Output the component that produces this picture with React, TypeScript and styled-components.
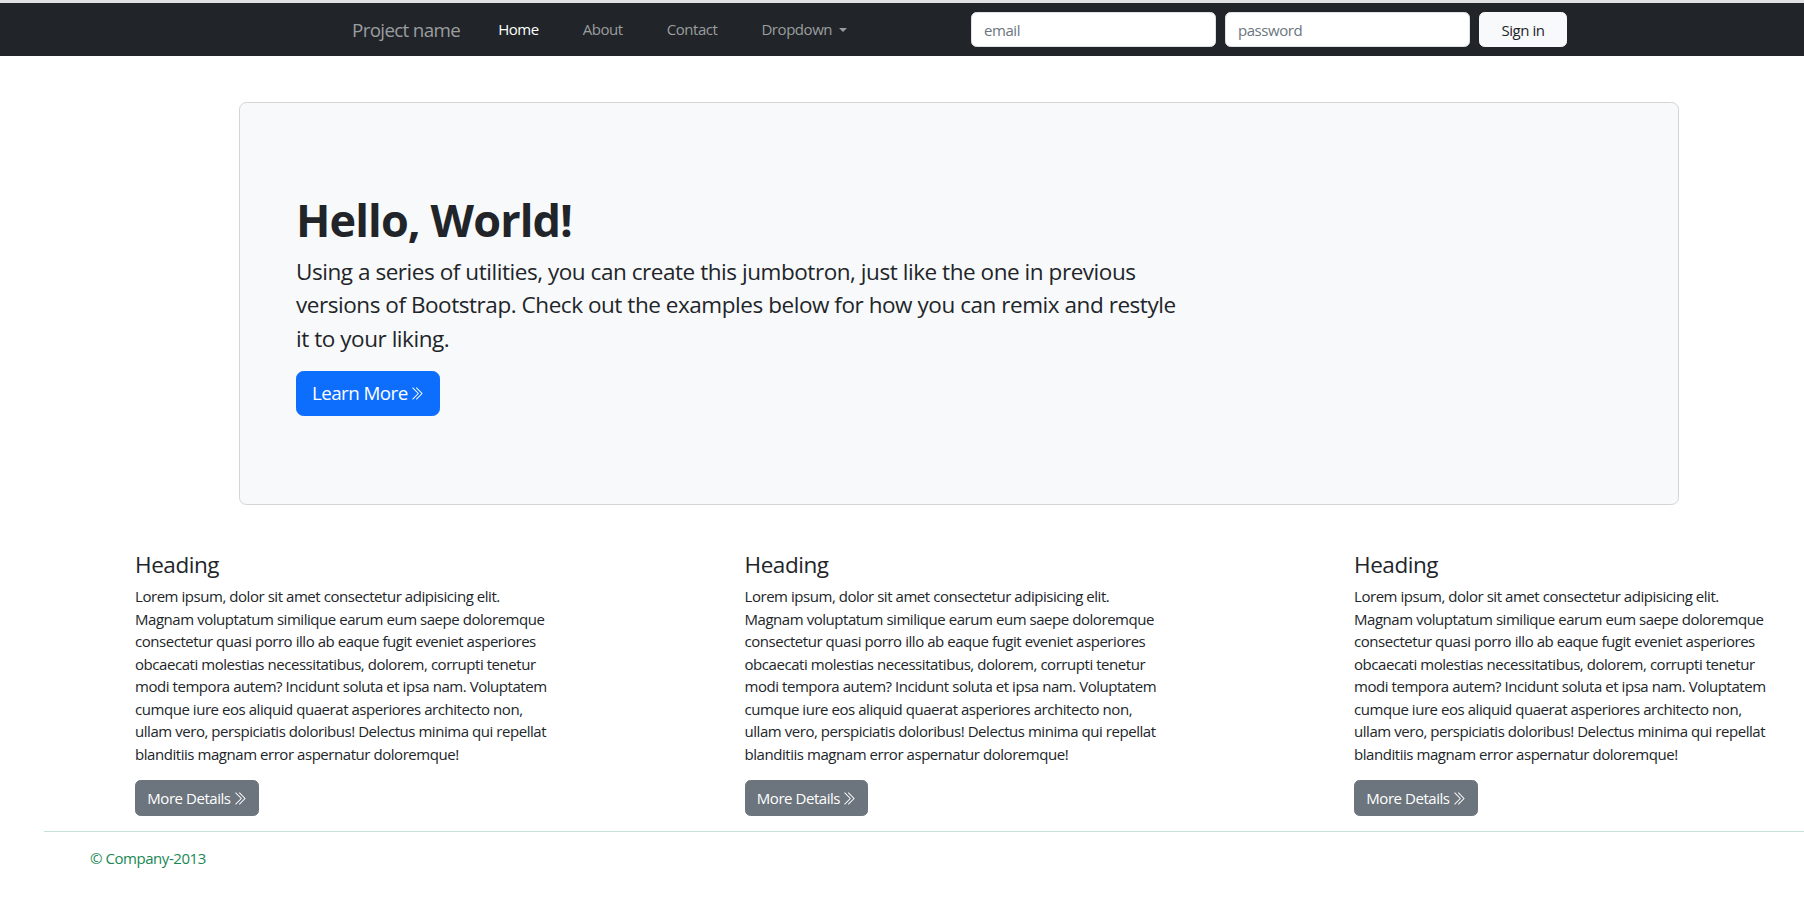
import React from "react";
import styled, { createGlobalStyle } from "styled-components";
import { BsChevronDoubleRight } from "react-icons/bs";

const GlobalStyle = createGlobalStyle`
  html, body {
    margin: 0;
    padding: 0;
    background: #ffffff;
  }
  body {
    font-family: "Open Sans", "Noto Sans", "Liberation Sans", sans-serif;
    font-size: 15px;
    line-height: 22.5px;
    color: #212529;
    letter-spacing: -0.03em;
    overflow-x: hidden;
  }
  * { box-sizing: border-box; }
`;

const Page = styled.div`
  display: flex;
  flex-direction: column;
  min-height: 900px;
`;

const TopEdge = styled.div`
  height: 3px;
  background: #dfe1e3;
`;

const NavBar = styled.nav`
  height: 53px;
  background: #212529;
  display: flex;
  align-items: center;
`;

const NavLeft = styled.div`
  flex: 0 0 971px;
  padding-left: 352px;
  display: flex;
  align-items: center;
`;

const Brand = styled.a`
  font-size: 18.8px;
  line-height: 28px;
  color: #9b9d9f;
  text-decoration: none;
  margin-right: 16px;
  letter-spacing: -0.035em;
`;

const NavList = styled.ul`
  list-style: none;
  margin: 0;
  padding: 0;
  display: flex;
  align-items: center;
`;

const NavLink = styled.a<{ $active?: boolean }>`
  display: inline-flex;
  align-items: center;
  padding: 0 22px;
  font-size: 15px;
  line-height: 22.5px;
  color: ${(p) => (p.$active ? "#ffffff" : "#9b9d9f")};
  text-decoration: none;
`;

const Caret = styled.span`
  display: inline-block;
  margin-left: 7px;
  width: 0;
  height: 0;
  border-top: 4.5px solid #9b9d9f;
  border-left: 4.5px solid transparent;
  border-right: 4.5px solid transparent;
`;

const SignInForm = styled.form`
  display: flex;
  align-items: center;
  gap: 9px;
`;

const TextInput = styled.input`
  width: 245px;
  height: 35px;
  padding: 0 12px;
  border: 1px solid #dee2e6;
  border-radius: 5.6px;
  background: #ffffff;
  font-family: inherit;
  font-size: 15px;
  letter-spacing: -0.03em;
  color: #212529;
  &::placeholder {
    color: #6c757d;
  }
`;

const LightButton = styled.button`
  width: 88px;
  height: 35px;
  border: 1px solid #f8f9fa;
  border-radius: 5.6px;
  background: #f8f9fa;
  color: #212529;
  font-family: inherit;
  font-size: 15px;
  letter-spacing: -0.03em;
  padding: 0;
`;

const Jumbotron = styled.section`
  margin: 46px 0 0 239px;
  width: 1440px;
  background: #f8f9fa;
  border: 1px solid #d2d4d6;
  border-radius: 7.5px;
  padding: 90px 56px 88px;
`;

const JumboTitle = styled.h1`
  margin: 0 0 7.5px;
  font-size: 45px;
  line-height: 54px;
  font-weight: 700;
  color: #212529;
  letter-spacing: -0.02em;
`;

const Lead = styled.p`
  margin: 0 0 15px;
  max-width: 884px;
  font-size: 22.5px;
  line-height: 33.75px;
  color: #212529;
`;

const Button = styled.button<{ $variant: "primary" | "secondary"; $large?: boolean }>`
  display: inline-flex;
  align-items: center;
  font-family: inherit;
  letter-spacing: -0.03em;
  color: #ffffff;
  background: ${(p) => (p.$variant === "primary" ? "#0d6efd" : "#6c757d")};
  border: 1px solid ${(p) => (p.$variant === "primary" ? "#0d6efd" : "#6c757d")};
  border-radius: ${(p) => (p.$large ? "7.5px" : "5.6px")};
  font-size: ${(p) => (p.$large ? "18.8px" : "15px")};
  line-height: ${(p) => (p.$large ? "28.2px" : "22.5px")};
  padding: ${(p) => (p.$large ? "7.5px 15px" : "5.6px 11.3px")};
  svg {
    width: 15px;
    height: 15px;
    margin-left: 1px;
  }
`;

const Columns = styled.div`
  display: grid;
  grid-template-columns: repeat(3, 421px);
  column-gap: 188.5px;
  margin-top: 46px;
  padding-left: 135px;
`;

const Column = styled.div`
  display: flex;
  flex-direction: column;
  align-items: flex-start;
`;

const ColumnTitle = styled.h4`
  margin: 0 0 7.5px;
  font-size: 22.5px;
  line-height: 27px;
  font-weight: 500;
  color: #212529;
`;

const ColumnText = styled.p`
  margin: 0 0 15px;
  font-size: 15px;
  line-height: 22.5px;
`;

const Footer = styled.footer`
  margin-left: 44px;
  color: #198754;
`;

const Rule = styled.hr`
  margin: 15px 0;
  border: 0;
  border-top: 1px solid rgba(25, 135, 84, 0.25);
`;

const Copyright = styled.p`
  margin: 0;
  padding-left: 46px;
  font-size: 15px;
  line-height: 22.5px;
`;

const lorem =
  "Lorem ipsum, dolor sit amet consectetur adipisicing elit. Magnam voluptatum similique earum eum saepe doloremque consectetur quasi porro illo ab eaque fugit eveniet asperiores obcaecati molestias necessitatibus, dolorem, corrupti tenetur modi tempora autem? Incidunt soluta et ipsa nam. Voluptatem cumque iure eos aliquid quaerat asperiores architecto non, ullam vero, perspiciatis doloribus! Delectus minima qui repellat blanditiis magnam error aspernatur doloremque!";

const navItems = [
  { label: "Home", active: true },
  { label: "About" },
  { label: "Contact" },
];

export default function App() {
  return (
    <>
      <GlobalStyle />
      <Page>
        <TopEdge />
        <NavBar>
          <NavLeft>
            <Brand href="#">Project name</Brand>
            <NavList>
              {navItems.map((item) => (
                <li key={item.label}>
                  <NavLink href="#" $active={item.active}>
                    {item.label}
                  </NavLink>
                </li>
              ))}
              <li>
                <NavLink href="#">
                  Dropdown
                  <Caret />
                </NavLink>
              </li>
            </NavList>
          </NavLeft>
          <SignInForm onSubmit={(e) => e.preventDefault()}>
            <TextInput type="text" placeholder="email" />
            <TextInput type="password" placeholder="password" />
            <LightButton type="submit">Sign in</LightButton>
          </SignInForm>
        </NavBar>

        <Jumbotron>
          <JumboTitle>Hello, World!</JumboTitle>
          <Lead>
            Using a series of utilities, you can create this jumbotron, just like the one in
            previous versions of Bootstrap. Check out the examples below for how you can remix
            and restyle it to your liking.
          </Lead>
          <Button $variant="primary" $large type="button">
            Learn More
            <BsChevronDoubleRight />
          </Button>
        </Jumbotron>

        <Columns>
          {[0, 1, 2].map((i) => (
            <Column key={i}>
              <ColumnTitle>Heading</ColumnTitle>
              <ColumnText>{lorem}</ColumnText>
              <Button $variant="secondary" type="button">
                More Details
                <BsChevronDoubleRight />
              </Button>
            </Column>
          ))}
        </Columns>

        <Footer>
          <Rule />
          <Copyright>© Company-2013</Copyright>
        </Footer>
      </Page>
    </>
  );
}
